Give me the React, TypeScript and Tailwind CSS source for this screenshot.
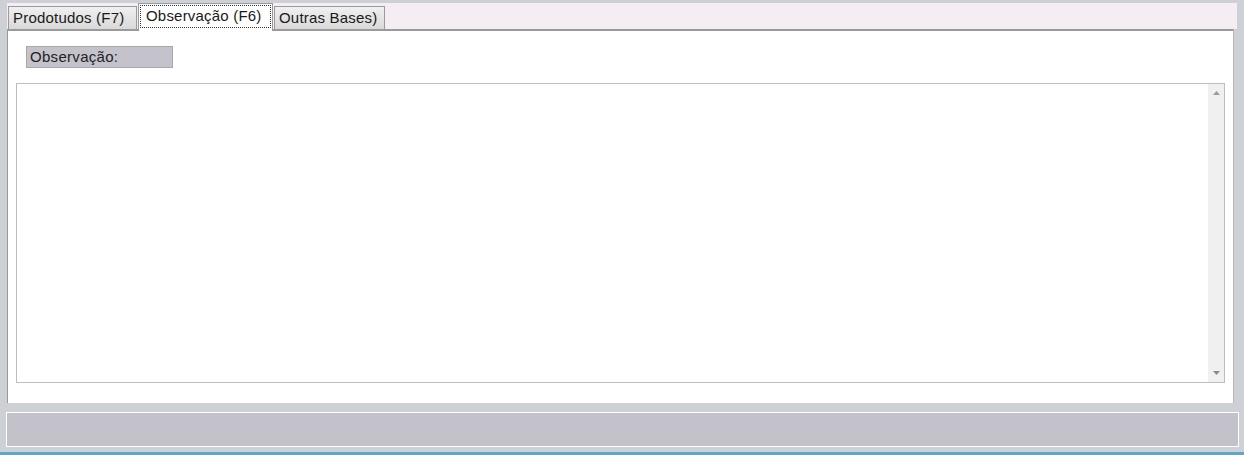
import React from "react";

const font = { fontFamily: '"Liberation Sans", Arial, sans-serif' };

function Tab({ label, width, active }: { label: string; width: string; active?: boolean }) {
  if (active) {
    return (
      <div className={`relative z-10 -mb-[2px] flex h-[28px] items-start border border-b-0 border-[#9a9a9a] bg-white px-[1px] pt-[1px] ${width}`}>
        <div className="flex h-[23px] flex-1 items-center whitespace-nowrap border border-dotted border-[#333] px-[5px] text-[15px] tracking-[0.2px] text-[#1a1a1a]">
          {label}
        </div>
      </div>
    );
  }
  return (
    <div className={`mt-[3px] flex h-[23px] items-center whitespace-nowrap border border-b-0 border-[#9a9a9a] bg-gradient-to-b from-[#f0f0f0] to-[#d9d9d9] px-[4px] text-[15px] tracking-[0.2px] text-[#1a1a1a] ${width}`}>
      {label}
    </div>
  );
}

export default function App() {
  return (
    <div
      className="flex h-[455px] w-[1244px] flex-col border-b-[3px] border-[#62a6c6] bg-[#cdd0d4]"
      style={font}
    >
      {/* Tabs */}
      <div className="ml-[7px] mr-[7px] mt-[3px] flex h-[26px] items-end gap-[1px] bg-[#f4eef4] pl-[1px]">
        <Tab label="Prodotudos (F7)" width="w-[129px]" />
        <Tab label="Observação (F6)" width="w-[135px]" active />
        <Tab label="Outras Bases)" width="w-[111px]" />
      </div>

      {/* Panel */}
      <div className="ml-[7px] mr-[10px] flex h-[374px] flex-col border-l border-t-2 border-r border-[#9a9a9a] border-r-[#b8b8b8] bg-white">
        <div className="px-[18px] pt-[15px]">
          <div className="flex h-[22px] w-[147px] items-center whitespace-nowrap border border-[#a8a8a8] bg-[#c4c3cc] px-[3px] text-[15px] tracking-[0.3px] text-[#222]">
            Observação:
          </div>
        </div>
        <div className="mx-[8px] mt-[15px] flex h-[300px] border border-[#bdbdbd]">
          <div className="flex-1" />
          <div className="flex w-[16px] flex-col items-center justify-between bg-[#f0f0f0] py-[7px]">
            <svg width="7" height="4" viewBox="0 0 7 4">
              <path d="M3.5 0 L7 4 L0 4 Z" fill="#9a9a9a" />
            </svg>
            <svg width="7" height="4" viewBox="0 0 7 4">
              <path d="M0 0 L7 0 L3.5 4 Z" fill="#8a8a8a" />
            </svg>
          </div>
        </div>
      </div>

      {/* Status bar */}
      <div className="ml-[6px] mr-[5px] mt-[9px] h-[35px] border border-white bg-[#c3c2ca]" />
    </div>
  );
}
